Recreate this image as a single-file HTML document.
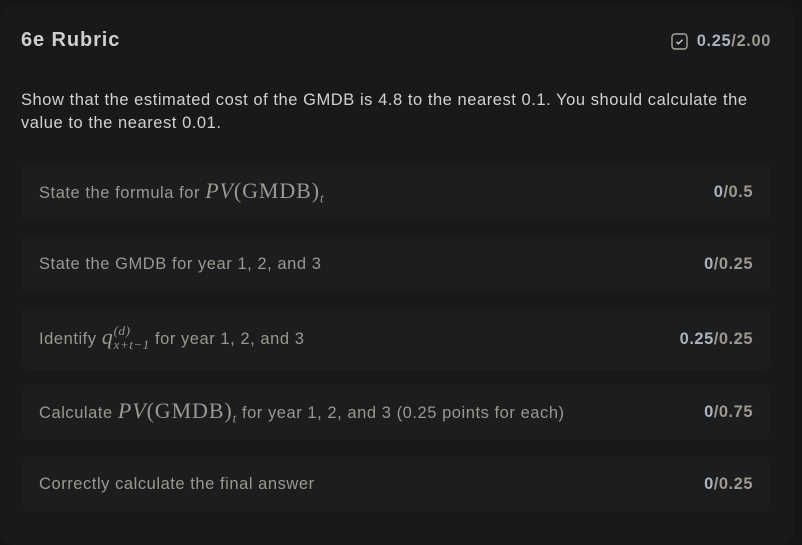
<!DOCTYPE html><html><head><style>
body{margin:0;width:802px;height:526px;background:#141517;font-family:"Liberation Sans",sans-serif;overflow:hidden}
.card{position:absolute;left:0;top:5px;width:795px;height:540px;background:#18191b;border-radius:14px}
.t{position:absolute;left:21px;top:29px;font-size:20px;font-weight:bold;color:#cfcfcf;letter-spacing:0.9px}
.sc{position:absolute;right:31px;top:32px;font-size:16.5px;font-weight:bold;color:#9c978f;display:flex;align-items:center;letter-spacing:0.6px}
.sc b{color:#a9b2be}
.desc{position:absolute;left:21px;top:89px;width:750px;font-size:16.5px;line-height:23px;color:#d2d2d2;letter-spacing:0.55px}
.row{position:absolute;left:21px;width:750px;background:#1c1d1f;border-radius:10px;display:flex;align-items:center;justify-content:space-between;padding:0 18px;box-sizing:border-box;font-size:16.5px;color:#9c978f;letter-spacing:0.55px}
.row .r{font-weight:bold;letter-spacing:0.5px}.row .r b{color:#a9b2be}
.m{font-family:"Liberation Serif",serif;font-size:22px;letter-spacing:0.9px}
i.m{font-style:italic}
sub,sup{font-family:"Liberation Serif",serif;font-style:italic;font-size:13px}
</style></head><body><div class="card"></div>
<div class="t">6e Rubric</div>
<div class="sc"><svg width="17" height="17" viewBox="0 0 17 17" style="margin-right:9px"><rect x="1" y="1" width="15" height="15" rx="3" fill="none" stroke="#aaa49b" stroke-width="1.4"/><path d="M5.5 8.8l2 2 4-4" fill="none" stroke="#cfcfcf" stroke-width="1.4"/></svg><b>0.25</b>/2.00</div>
<div class="desc">Show that the estimated cost of the GMDB is 4.8 to the nearest 0.1. You should calculate the value to the nearest 0.01.</div>
<div class="row" style="top:164px;height:56px"><span>State the formula for <i class="m">PV</i><span class="m">(GMDB)</span><sub>t</sub></span><span class="r"><b>0</b>/0.5</span></div>
<div class="row" style="top:236px;height:56px"><span>State the GMDB for year 1, 2, and 3</span><span class="r"><b>0</b>/0.25</span></div>
<div class="row" style="top:308px;height:62px"><span>Identify <i class="m">q</i><span style="display:inline-flex;flex-direction:column;vertical-align:middle;line-height:14px;position:relative;top:-2px"><sup>(d)</sup><sub>x+t−1</sub></span> for year 1, 2, and 3</span><span class="r"><b>0.25</b>/0.25</span></div>
<div class="row" style="top:384px;height:56px"><span>Calculate <i class="m">PV</i><span class="m">(GMDB)</span><sub>t</sub> for year 1, 2, and 3 (0.25 points for each)</span><span class="r"><b>0</b>/0.75</span></div>
<div class="row" style="top:456px;height:56px"><span>Correctly calculate the final answer</span><span class="r"><b>0</b>/0.25</span></div>
</body></html>
